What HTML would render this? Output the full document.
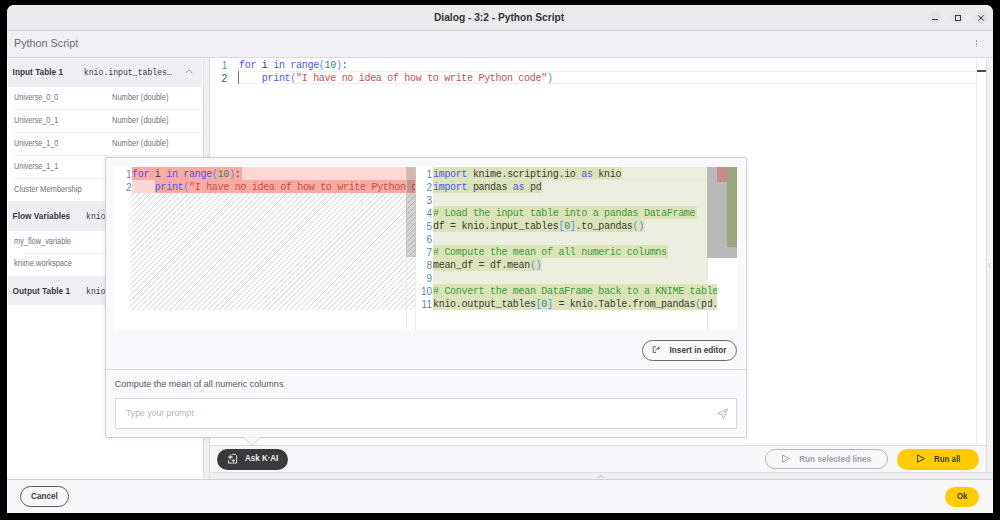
<!DOCTYPE html>
<html><head><meta charset="utf-8">
<style>
*{box-sizing:border-box}
html,body{margin:0;padding:0}
body{width:1000px;height:520px;background:#000;position:relative;overflow:hidden;font-family:"Liberation Sans",sans-serif}
.a{position:absolute}
.t{position:absolute;white-space:pre;line-height:1}
.mono{font-family:"Liberation Mono",monospace}
</style></head><body>
<div class="a" style="left:7px;top:5px;width:986px;height:508px;border-radius:7px 7px 0 0;background:#f7f7f9"></div>
<div class="a" style="left:7px;top:5px;width:986px;height:25px;border-radius:7px 7px 0 0;background:#ebebed"></div>
<div class="a" style="left:7px;top:30px;width:986px;height:1px;background:#d4d4d6"></div>
<div class="t" style="left:434px;top:12.93px;font-size:10.2px;font-weight:bold;color:#333;">Dialog - 3:2 - Python Script</div>
<div class="a" style="left:928px;top:10.5px;width:13px;height:13px;background:#e4e4e6;border-radius:6.5px"></div>
<div class="a" style="left:951px;top:10.5px;width:13px;height:13px;background:#e4e4e6;border-radius:6.5px"></div>
<div class="a" style="left:974.5px;top:10.5px;width:13px;height:13px;background:#e4e4e6;border-radius:6.5px"></div>
<div class="a" style="left:932px;top:18.6px;width:5.5px;height:1px;background:#3a3a3a"></div>
<div class="a" style="left:955px;top:15px;width:5.5px;height:5.5px;border:1px solid #3a3a3a"></div>
<svg class="a" style="left:977px;top:14px" width="8" height="8"><path d="M1.2 1.3 L6.8 6.6 M6.8 1.3 L1.2 6.6" stroke="#3a3a3a" stroke-width="1"/></svg>
<div class="a" style="left:7px;top:31px;width:986px;height:26px;background:#f0f0f4"></div>
<div class="a" style="left:7px;top:57px;width:986px;height:1px;background:#d8d8dc"></div>
<div class="t" style="left:14px;top:38.22px;font-size:10.8px;font-weight:normal;color:#6b6b6b;">Python Script</div>
<div class="a" style="left:975.5px;top:40.3px;width:1.4px;height:1.4px;background:#888;border-radius:1px"></div>
<div class="a" style="left:975.5px;top:43.199999999999996px;width:1.4px;height:1.4px;background:#888;border-radius:1px"></div>
<div class="a" style="left:975.5px;top:46.099999999999994px;width:1.4px;height:1.4px;background:#888;border-radius:1px"></div>
<div class="a" style="left:7px;top:58px;width:196px;height:421px;background:#fff"></div>
<div class="a" style="left:8px;top:58px;width:194px;height:28.5px;background:#efeff3"></div>
<div class="t" style="left:12.6px;top:67.94px;font-size:8.3px;font-weight:bold;color:#3a3a3a;">Input Table 1</div>
<div class="a" style="left:8px;top:200.5px;width:194px;height:30.5px;background:#efeff3"></div>
<div class="t" style="left:12.6px;top:211.94px;font-size:8.3px;font-weight:bold;color:#3a3a3a;">Flow Variables</div>
<div class="a" style="left:8px;top:276px;width:194px;height:28.600000000000023px;background:#efeff3"></div>
<div class="t" style="left:12.6px;top:287.14px;font-size:8.3px;font-weight:bold;color:#3a3a3a;">Output Table 1</div>
<div class="t mono" style="left:83.8px;top:68.79px;font-size:8.17px;color:#3a3a3a">knio.input_tables…</div>
<div class="t mono" style="left:86px;top:212.79px;font-size:8.17px;color:#3a3a3a">knio.flow_variables</div>
<div class="t mono" style="left:86px;top:287.99px;font-size:8.17px;color:#3a3a3a">knio.output_tables[0]</div>
<div class="t" style="left:13.9px;top:92.61px;font-size:8.7px;font-weight:normal;color:#727272;;transform:scaleX(0.8228);transform-origin:0 0">Universe_0_0</div>
<div class="t" style="left:111.6px;top:92.61px;font-size:8.7px;font-weight:normal;color:#727272;;transform:scaleX(0.8666);transform-origin:0 0">Number (double)</div>
<div class="t" style="left:13.9px;top:115.61px;font-size:8.7px;font-weight:normal;color:#727272;;transform:scaleX(0.8228);transform-origin:0 0">Universe_0_1</div>
<div class="t" style="left:111.6px;top:115.61px;font-size:8.7px;font-weight:normal;color:#727272;;transform:scaleX(0.8666);transform-origin:0 0">Number (double)</div>
<div class="a" style="left:14px;top:109.0px;width:187px;height:1px;background:#f3f3f5"></div>
<div class="t" style="left:13.9px;top:138.60px;font-size:8.7px;font-weight:normal;color:#727272;;transform:scaleX(0.8228);transform-origin:0 0">Universe_1_0</div>
<div class="t" style="left:111.6px;top:138.60px;font-size:8.7px;font-weight:normal;color:#727272;;transform:scaleX(0.8666);transform-origin:0 0">Number (double)</div>
<div class="a" style="left:14px;top:132.0px;width:187px;height:1px;background:#f3f3f5"></div>
<div class="t" style="left:13.9px;top:161.60px;font-size:8.7px;font-weight:normal;color:#727272;;transform:scaleX(0.8228);transform-origin:0 0">Universe_1_1</div>
<div class="t" style="left:111.6px;top:161.60px;font-size:8.7px;font-weight:normal;color:#727272;;transform:scaleX(0.8666);transform-origin:0 0">Number (double)</div>
<div class="a" style="left:14px;top:155.0px;width:187px;height:1px;background:#f3f3f5"></div>
<div class="t" style="left:13.9px;top:184.60px;font-size:8.7px;font-weight:normal;color:#727272;;transform:scaleX(0.8713);transform-origin:0 0">Cluster Membership</div>
<div class="a" style="left:14px;top:178.0px;width:187px;height:1px;background:#f3f3f5"></div>
<div class="t" style="left:13.9px;top:236.78px;font-size:8.5px;font-weight:normal;color:#727272;;transform:scaleX(0.8676);transform-origin:0 0">my_flow_variable</div>
<div class="t" style="left:13.9px;top:259.47px;font-size:8.5px;font-weight:normal;color:#727272;;transform:scaleX(0.8828);transform-origin:0 0">knime.workspace</div>
<div class="a" style="left:23px;top:253px;width:178px;height:1px;background:#f3f3f5"></div>
<svg class="a" style="left:184px;top:68px" width="10" height="7"><path d="M1.8 5 L5 1.8 L8.2 5" fill="none" stroke="#888" stroke-width="0.9"/></svg>
<div class="a" style="left:203px;top:58px;width:7px;height:421px;background:#f0f0f3;border-left:1px solid #dcdcdf;border-right:1px solid #dcdcdf"></div>
<div class="a" style="left:210px;top:58px;width:776px;height:387px;background:#fff"></div>
<div class="a" style="left:986px;top:58px;width:7px;height:421px;background:#f1f1f4;border-left:1px solid #dedee1"></div>
<div class="a" style="left:238px;top:71px;width:738px;height:13px;border-top:1px solid #eeeef0;border-bottom:1px solid #eeeef0"></div>
<div class="a" style="left:238px;top:71px;width:1px;height:13px;background:#7a7a7a"></div>
<div class="t" style="left:221.8px;top:60.91px;font-size:10.4px;font-weight:normal;color:#6f8f9a;">1</div>
<div class="t" style="left:221.5px;top:74.06px;font-size:10.4px;font-weight:normal;color:#2f5a8a;">2</div>
<div class="t mono" style="left:239px;top:61.10px;font-size:10px;letter-spacing:-0.30px"><span style="color:#4b58ee">for</span><span style="color:#3a3a3a"> i </span><span style="color:#4b58ee">in</span> <span style="color:#4b58ee">range</span><span style="color:#5a8ce8">(</span><span style="color:#2d8a68">10</span><span style="color:#5a8ce8">)</span><span style="color:#3a3a3a">:</span></div>
<div class="t mono" style="left:239px;top:74.20px;font-size:10px;letter-spacing:-0.30px">    <span style="color:#4b58ee">print</span><span style="color:#5a8ce8">(</span><span style="color:#c8504c">&quot;I have no idea of how to write Python code&quot;</span><span style="color:#5a8ce8">)</span></div>
<div class="a" style="left:976px;top:58px;width:1px;height:387px;background:#ececef"></div>
<svg class="a" style="left:987px;top:262px" width="6" height="7"><path d="M4.3 1 L2 3.5 L4.3 6" fill="none" stroke="#c4c4c7" stroke-width="0.9"/></svg>
<div class="a" style="left:977px;top:69.5px;width:9px;height:2px;background:#4a4a4a"></div>
<div class="a" style="left:210px;top:445px;width:776px;height:1px;background:#dcdcdf"></div>
<div class="a" style="left:210px;top:446px;width:776px;height:26px;background:#f7f7f9"></div>
<div class="a" style="left:210px;top:472px;width:783px;height:8px;background:#efeff1;border-top:1px solid #dcdcdf"></div>
<div class="a" style="left:7px;top:479px;width:986px;height:1px;background:#d3d3d6"></div>
<svg class="a" style="left:597px;top:472.5px" width="8" height="6"><path d="M1.5 4.8 L4 2.2 L6.5 4.8" fill="none" stroke="#b0b0b3" stroke-width="0.9"/></svg>
<div class="a" style="left:217px;top:449px;width:71px;height:20.5px;background:#3a3a3c;border-radius:10.5px"></div>
<div class="t" style="left:244.5px;top:454.35px;font-size:9px;font-weight:bold;color:#f2f2f2;;transform:scaleX(0.8880);transform-origin:0 0">Ask K·AI</div>
<svg class="a" style="left:227px;top:453px" width="12" height="12"><path d="M4.8 1.3 H8.2 L9.6 2.7 V10.1 H1.5 V7.2" fill="none" stroke="#e6e6e6" stroke-width="0.95"/><path d="M3.4 1.4999999999999996 Q3.4 4.1 6.0 4.1 Q3.4 4.1 3.4 6.699999999999999 Q3.4 4.1 0.7999999999999998 4.1 Q3.4 4.1 3.4 1.4999999999999996 Z" fill="#e6e6e6" stroke="#e6e6e6" stroke-width="0.5"/><path d="M6.4 5.8999999999999995 Q6.4 7.6 8.1 7.6 Q6.4 7.6 6.4 9.299999999999999 Q6.4 7.6 4.7 7.6 Q6.4 7.6 6.4 5.8999999999999995 Z" fill="#e6e6e6" stroke="#e6e6e6" stroke-width="0.4"/></svg>
<div class="a" style="left:765px;top:449.3px;width:122.5px;height:20px;border:1px solid #b5b5b8;border-radius:10px"></div>
<div class="t" style="left:799.2px;top:455.63px;font-size:8.2px;font-weight:bold;color:#a0a0a3;">Run selected lines</div>
<svg class="a" style="left:781px;top:454px" width="10" height="10"><path d="M1.5 1 L8.5 4.6 L1.5 8.2 Z" fill="none" stroke="#a8a8ab" stroke-width="1" stroke-linejoin="round"/></svg>
<div class="a" style="left:897px;top:449px;width:82px;height:20.5px;background:#ffcc00;border-radius:10.5px"></div>
<div class="t" style="left:933.6px;top:454.81px;font-size:8.7px;font-weight:bold;color:#3d3d3d;;transform:scaleX(0.9066);transform-origin:0 0">Run all</div>
<svg class="a" style="left:915.5px;top:454px" width="10" height="10"><path d="M1.5 1 L8.5 4.6 L1.5 8.2 Z" fill="none" stroke="#3d3d3d" stroke-width="1" stroke-linejoin="round"/></svg>
<div class="a" style="left:20px;top:486px;width:49px;height:21px;border:1px solid #555;border-radius:11px"></div>
<div class="t" style="left:31px;top:492.73px;font-size:8.2px;font-weight:bold;color:#3d3d3d;">Cancel</div>
<div class="a" style="left:945px;top:487px;width:34px;height:20px;background:#ffcc00;border-radius:10px"></div>
<div class="t" style="left:957.1px;top:492.49px;font-size:8.6px;font-weight:bold;color:#3d3d3d;;transform:scaleX(0.9100);transform-origin:0 0">Ok</div>
<div class="a" style="left:105px;top:157px;width:642px;height:281px;background:#f9f9fc;border:1px solid #cfcfd3;border-radius:2px;box-shadow:0 0 4px rgba(0,0,0,0.10)"></div>
<div class="a" style="left:114px;top:167px;width:623px;height:163px;background:#fff"></div>
<div class="a" style="left:132px;top:167px;width:284px;height:13px;background:#ffd8d4"></div>
<div class="a" style="left:132px;top:180px;width:284px;height:13px;background:#ffd8d4"></div>
<div class="a" style="left:132px;top:167px;width:110.17px;height:13px;background:#f8aaa3"></div>
<div class="a" style="left:154.92000000000002px;top:180px;width:261.08px;height:13px;background:#f8aaa3"></div>
<div class="a" style="left:128px;top:193px;width:288px;height:117px;background:repeating-linear-gradient(-45deg, rgba(190,190,194,0) 0px, rgba(195,195,199,0.85) 0.7px, rgba(190,190,194,0) 1.4px, rgba(190,190,194,0) 3.85px)"></div>
<div class="a" style="left:127px;top:193px;width:6px;height:117px;background:linear-gradient(to right, rgba(255,255,255,0.95), rgba(255,255,255,0))"></div>
<div class="t" style="left:121.5px;top:169.90px;font-size:10px;font-weight:normal;color:#6f8f9a;width:10px;text-align:right">1</div>
<div class="t" style="left:121.5px;top:182.90px;font-size:10px;font-weight:normal;color:#5e86a0;width:10px;text-align:right">2</div>
<div class="a" style="left:132px;top:167px;width:284px;height:26px;overflow:hidden">
<div class="t mono" style="left:0px;top:3.40px;font-size:10px;letter-spacing:-0.30px"><span style="color:#4b58ee">for</span><span style="color:#3a3a3a"> i </span><span style="color:#4b58ee">in</span> <span style="color:#4b58ee">range</span><span style="color:#5a8ce8">(</span><span style="color:#2d8a68">10</span><span style="color:#5a8ce8">)</span><span style="color:#3a3a3a">:</span></div>
<div class="t mono" style="left:0px;top:16.40px;font-size:10px;letter-spacing:-0.30px">    <span style="color:#4b58ee">print</span><span style="color:#5a8ce8">(</span><span style="color:#c8504c">&quot;I have no idea of how to write Python code&quot;</span><span style="color:#5a8ce8">)</span></div>
</div>
<div class="a" style="left:406px;top:167px;width:1px;height:163px;background:#ececee"></div>
<div class="a" style="left:415px;top:167px;width:1px;height:163px;background:#ececee"></div>
<div class="a" style="left:406px;top:167px;width:10px;height:90px;background:rgba(60,60,60,0.22)"></div>
<div class="a" style="left:433px;top:167px;width:274px;height:143px;background:#ecefdf"></div>
<div class="a" style="left:433px;top:167px;width:189.09px;height:13px;background:#dbe4b8"></div>
<div class="a" style="left:433px;top:180px;width:108.87px;height:13px;background:#dbe4b8"></div>
<div class="a" style="left:433px;top:206px;width:263.58000000000004px;height:13px;background:#dbe4b8"></div>
<div class="a" style="left:433px;top:219px;width:212.01000000000002px;height:13px;background:#dbe4b8"></div>
<div class="a" style="left:433px;top:245px;width:234.93px;height:13px;background:#dbe4b8"></div>
<div class="a" style="left:433px;top:258px;width:108.87px;height:13px;background:#dbe4b8"></div>
<div class="a" style="left:433px;top:284px;width:284px;height:13px;background:#dbe4b8"></div>
<div class="a" style="left:433px;top:297px;width:284px;height:13px;background:#dbe4b8"></div>
<div class="a" style="left:433px;top:179px;width:274px;height:1px;background:#e2e4d6"></div>
<div class="a" style="left:433px;top:167px;width:284px;height:143px;overflow:hidden">
<div class="t mono" style="left:0px;top:3.40px;font-size:10px;letter-spacing:-0.30px"><span style="color:#4b58ee">import</span><span style="color:#3a3a3a"> knime.scripting.io </span><span style="color:#4b58ee">as</span><span style="color:#3a3a3a"> knio</span></div>
<div class="t mono" style="left:0px;top:16.40px;font-size:10px;letter-spacing:-0.30px"><span style="color:#4b58ee">import</span><span style="color:#3a3a3a"> pandas </span><span style="color:#4b58ee">as</span><span style="color:#3a3a3a"> pd</span></div>
<div class="t mono" style="left:0px;top:42.40px;font-size:10px;letter-spacing:-0.30px"><span style="color:#3b9a3b"># Load the input table into a pandas DataFrame</span></div>
<div class="t mono" style="left:0px;top:55.40px;font-size:10px;letter-spacing:-0.30px"><span style="color:#3a3a3a">df = knio.input_tables</span><span style="color:#5a8ce8">[</span><span style="color:#2d8a68">0</span><span style="color:#5a8ce8">]</span><span style="color:#3a3a3a">.to_pandas</span><span style="color:#5a8ce8">()</span></div>
<div class="t mono" style="left:0px;top:81.40px;font-size:10px;letter-spacing:-0.30px"><span style="color:#3b9a3b"># Compute the mean of all numeric columns</span></div>
<div class="t mono" style="left:0px;top:94.40px;font-size:10px;letter-spacing:-0.30px"><span style="color:#3a3a3a">mean_df = df.mean</span><span style="color:#5a8ce8">()</span></div>
<div class="t mono" style="left:0px;top:120.40px;font-size:10px;letter-spacing:-0.30px"><span style="color:#3b9a3b"># Convert the mean DataFrame back to a KNIME table</span></div>
<div class="t mono" style="left:0px;top:133.40px;font-size:10px;letter-spacing:-0.30px"><span style="color:#3a3a3a">knio.output_tables</span><span style="color:#5a8ce8">[</span><span style="color:#2d8a68">0</span><span style="color:#5a8ce8">]</span><span style="color:#3a3a3a"> = knio.Table.from_pandas</span><span style="color:#5a8ce8">(</span><span style="color:#3a3a3a">pd.DataFrame</span><span style="color:#5a8ce8">(</span><span style="color:#3a3a3a">mean_df</span><span style="color:#5a8ce8">))</span></div>
</div>
<div class="t" style="left:412px;top:169.90px;font-size:10px;font-weight:normal;color:#5e86a0;width:20px;text-align:right">1</div>
<div class="t" style="left:412px;top:182.90px;font-size:10px;font-weight:normal;color:#5e86a0;width:20px;text-align:right">2</div>
<div class="t" style="left:412px;top:195.90px;font-size:10px;font-weight:normal;color:#5e86a0;width:20px;text-align:right">3</div>
<div class="t" style="left:412px;top:208.90px;font-size:10px;font-weight:normal;color:#5e86a0;width:20px;text-align:right">4</div>
<div class="t" style="left:412px;top:221.90px;font-size:10px;font-weight:normal;color:#5e86a0;width:20px;text-align:right">5</div>
<div class="t" style="left:412px;top:234.90px;font-size:10px;font-weight:normal;color:#5e86a0;width:20px;text-align:right">6</div>
<div class="t" style="left:412px;top:247.90px;font-size:10px;font-weight:normal;color:#5e86a0;width:20px;text-align:right">7</div>
<div class="t" style="left:412px;top:260.90px;font-size:10px;font-weight:normal;color:#5e86a0;width:20px;text-align:right">8</div>
<div class="t" style="left:412px;top:273.90px;font-size:10px;font-weight:normal;color:#5e86a0;width:20px;text-align:right">9</div>
<div class="t" style="left:412px;top:286.90px;font-size:10px;font-weight:normal;color:#5e86a0;width:20px;text-align:right">10</div>
<div class="t" style="left:412px;top:299.90px;font-size:10px;font-weight:normal;color:#5e86a0;width:20px;text-align:right">11</div>
<div class="a" style="left:707px;top:167px;width:1px;height:163px;background:#e6e6e8"></div>
<div class="a" style="left:707px;top:167px;width:30px;height:90.5px;background:#b9b9bb"></div>
<div class="a" style="left:716.8px;top:167px;width:10.2px;height:14.7px;background:#c98b89"></div>
<div class="a" style="left:727px;top:167px;width:10px;height:79.5px;background:#9aa77a"></div>
<div class="a" style="left:641.5px;top:340px;width:95.5px;height:20.5px;border:1px solid #6a6a6a;border-radius:10.5px"></div>
<div class="t" style="left:669.6px;top:346.63px;font-size:8.2px;font-weight:bold;color:#3d3d3d;">Insert in editor</div>
<svg class="a" style="left:651px;top:345px" width="11" height="9"><path d="M5 1.8 H2.2 V7.6 H5" fill="none" stroke="#555" stroke-width="0.9"/><path d="M4.5 5.6 Q5 3.2 8.4 3.2 M6.8 1.7 L8.6 3.2 L6.8 4.7" fill="none" stroke="#555" stroke-width="0.9"/></svg>
<div class="a" style="left:105px;top:369px;width:642px;height:1px;background:#dcdce0"></div>
<div class="t" style="left:114.8px;top:379.65px;font-size:9px;font-weight:normal;color:#5a5a5a;">Compute the mean of all numeric columns</div>
<div class="a" style="left:115px;top:398px;width:622px;height:31px;background:#fff;border:1px solid #d8d8dc"></div>
<div class="t" style="left:126px;top:409.11px;font-size:8.7px;font-weight:normal;color:#b5b5b8;">Type your prompt</div>
<svg class="a" style="left:715.5px;top:406.5px" width="14" height="14"><path d="M1.5 6.5 L11.5 1.8 L7.5 11.8 L5.8 7.8 Z M5.8 7.8 L11.5 1.8" fill="none" stroke="#b3b3b6" stroke-width="0.9" stroke-linejoin="round"/></svg>
<svg class="a" style="left:244.3px;top:436.5px" width="16" height="9"><path d="M0 0.5 L8 8.5 L16 0.5" fill="#f9f9fc" stroke="#cfcfd3" stroke-width="1"/><rect x="0.8" y="-1" width="14.4" height="1.5" fill="#f9f9fc"/></svg>
</body></html>
